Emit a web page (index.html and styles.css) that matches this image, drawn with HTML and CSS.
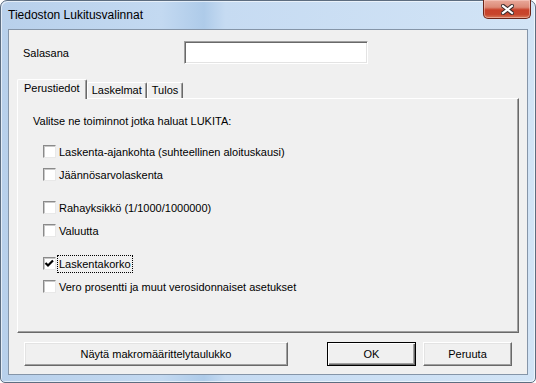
FILE: index.html
```html
<!DOCTYPE html>
<html lang="fi">
<head>
    <meta charset="UTF-8">
    <title>Tiedoston Lukitusvalinnat</title>
    <link rel="stylesheet" href="styles.css">
</head>

<body>
    <div class="window">
        <div class="titlebar">
            <span class="title">Tiedoston Lukitusvalinnat</span>
            <div class="close-btn">
                <svg width="13" height="11" viewBox="0 0 13 11">
                    <path d="M2 2 L11 9 M11 2 L2 9" stroke="#3a2a2a" stroke-width="4.2" stroke-linecap="square" fill="none"/>
                    <path d="M2 2 L11 9 M11 2 L2 9" stroke="#ffffff" stroke-width="2.2" stroke-linecap="square" fill="none"/>
                </svg>
            </div>
        </div>

        <div class="client">
            <div class="password-row">
                <label class="field-label" for="password">Salasana</label>
                <input type="password" id="password" class="text-input">
            </div>

            <div class="tabs">
                <div class="tab active">Perustiedot</div>
                <div class="tab">Laskelmat</div>
                <div class="tab">Tulos</div>
            </div>

            <div class="tab-panel">
                <p class="intro">Valitse ne toiminnot jotka haluat LUKITA:</p>

                <div class="option first">
                    <span class="checkbox"></span>
                    <span class="option-label">Laskenta-ajankohta (suhteellinen aloituskausi)</span>
                </div>
                <div class="option">
                    <span class="checkbox"></span>
                    <span class="option-label">Jäännösarvolaskenta</span>
                </div>

                <div class="option group">
                    <span class="checkbox"></span>
                    <span class="option-label">Rahayksikkö (1/1000/1000000)</span>
                </div>
                <div class="option">
                    <span class="checkbox"></span>
                    <span class="option-label">Valuutta</span>
                </div>

                <div class="option group">
                    <span class="checkbox checked">
                        <svg width="11" height="11" viewBox="0 0 11 11">
                            <polyline points="1.5,5 4,7.5 9,2.5" stroke="#000" stroke-width="2.2" fill="none"/>
                        </svg>
                    </span>
                    <span class="option-label focused">Laskentakorko</span>
                </div>
                <div class="option">
                    <span class="checkbox"></span>
                    <span class="option-label">Vero prosentti ja muut verosidonnaiset asetukset</span>
                </div>
            </div>

            <div class="button-row">
                <button class="btn btn-wide">Näytä makromäärittelytaulukko</button>
                <button class="btn btn-default">OK</button>
                <button class="btn">Peruuta</button>
            </div>
        </div>
    </div>
</body>
</html>
```

FILE: styles.css
```css
body {
    margin: 0;
    background: #ffffff;
    font-family: 'Liberation Sans', Arial, sans-serif;
    font-size: 11px;
    color: #000;
}

.window {
    width: 536px;
    height: 383px;
    box-sizing: border-box;
    border: 1px solid #5d6d80;
    border-radius: 7px 7px 5px 5px;
    padding: 0 7px 7px 7px;
    display: flex;
    flex-direction: column;
    background: linear-gradient(to right, #b8d0eb 0%, #c3d9f1 30%, #aecbe9 38%, #c6dbf2 42%, #d2e4f6 100%);
    box-shadow: inset 1px 1px 0 rgba(255, 255, 255, 0.6), inset -1px -1px 0 rgba(255, 255, 255, 0.6);
}

.titlebar {
    height: 28px;
    display: flex;
    justify-content: space-between;
    align-items: flex-start;
}

.title {
    font-size: 12px;
    line-height: 15px;
    margin-top: 7px;
    color: #000;
}

.close-btn {
    width: 48px;
    height: 19px;
    margin-top: -1px;
    margin-right: -3px;
    box-sizing: border-box;
    border: 1px solid #6b2418;
    border-top: none;
    border-radius: 0 0 5px 5px;
    background: linear-gradient(to bottom, #e9a99b 0%, #dc8a77 40%, #c8412a 55%, #c7452c 80%, #d77a5a 100%);
    box-shadow: inset 0 0 0 1px rgba(255, 220, 210, 0.45);
    display: flex;
    justify-content: center;
    align-items: center;
}

.client {
    flex: 1;
    border: 1px solid #8595a8;
    background: #f0f0f0;
    display: flex;
    flex-direction: column;
}

.password-row {
    display: flex;
    align-items: center;
    padding: 11px 0 0 14px;
}

.field-label {
    width: 161px;
}

.text-input {
    width: 184px;
    height: 23px;
    box-sizing: border-box;
    margin: 0;
    padding: 2px 3px;
    background: #fff;
    border-top: 1px solid #a0a0a0;
    border-left: 1px solid #a0a0a0;
    border-right: 1px solid #ffffff;
    border-bottom: 1px solid #ffffff;
    box-shadow: inset 1px 1px 0 #696969, inset -1px -1px 0 #e3e3e3;
    font: inherit;
    outline: none;
}

.tabs {
    display: flex;
    align-items: flex-end;
    margin: 15px 8px -1px 8px;
    position: relative;
    z-index: 1;
}

.tab {
    height: 16px;
    line-height: 15px;
    box-sizing: border-box;
    padding: 0 4px;
    background: #f0f0f0;
    border-top: 1px solid #ffffff;
    border-left: 1px solid #ffffff;
    border-right: 1px solid #696969;
    box-shadow: inset -1px 0 0 #a0a0a0;
    border-radius: 2px 2px 0 0;
    margin-bottom: 1px;
}

.tab.active {
    height: 20px;
    line-height: 17px;
    padding: 0 6px;
    margin-bottom: 0;
}

.tab-panel {
    flex: 1;
    margin: 0 8px;
    padding: 16px 0 0 15px;
    border-top: 1px solid #ffffff;
    border-left: 1px solid #ffffff;
    border-right: 1px solid #696969;
    border-bottom: 1px solid #696969;
    box-shadow: inset -1px -1px 0 #a0a0a0;
}

.intro {
    margin: 0;
    line-height: 13px;
}

.option {
    height: 13px;
    display: flex;
    align-items: center;
    margin: 10px 0 0 10px;
}

.option.first {
    margin-top: 17px;
}

.option.group {
    margin-top: 20px;
}

.checkbox {
    width: 13px;
    height: 13px;
    box-sizing: border-box;
    flex-shrink: 0;
    background: #ffffff;
    border-top: 1px solid #8a8a8a;
    border-left: 1px solid #8a8a8a;
    border-right: 1px solid #e8e8e8;
    border-bottom: 1px solid #e8e8e8;
    box-shadow: inset 1px 1px 0 #c8c8c8;
    display: flex;
    justify-content: center;
    align-items: center;
}

.option-label {
    margin-left: 1px;
    height: 16px;
    line-height: 16px;
    padding: 0 1px;
    border: 1px dotted transparent;
    white-space: nowrap;
}

.option-label.focused {
    border-color: #000;
}

.button-row {
    display: flex;
    gap: 7px;
    padding: 9px 15px 8px 15px;
}

.btn {
    height: 24px;
    width: 89px;
    box-sizing: border-box;
    margin: 0;
    padding: 0;
    font: inherit;
    color: #000;
    background: #f0f0f0;
    border-top: 1px solid #ffffff;
    border-left: 1px solid #ffffff;
    border-right: 1px solid #696969;
    border-bottom: 1px solid #696969;
    box-shadow: inset -1px -1px 0 #a0a0a0, inset 1px 1px 0 #e3e3e3;
}

.btn-wide {
    width: 264px;
    margin-right: auto;
}

.btn-default {
    border: 1px solid #000;
    box-shadow: inset 1px 1px 0 #ffffff, inset -1px -1px 0 #696969, inset -2px -2px 0 #a0a0a0;
}
```
